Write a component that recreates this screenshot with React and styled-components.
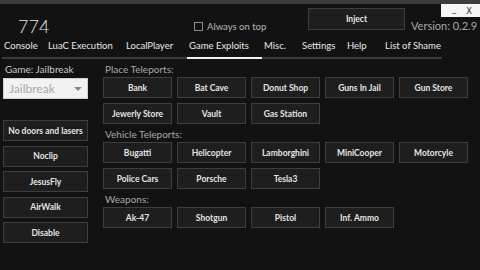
import React from "react";
import styled, { createGlobalStyle } from "styled-components";

const Global = createGlobalStyle`
  html, body { margin: 0; padding: 0; background: #121212; }
  body { font-family: Lato, "Open Sans", sans-serif; }
  * { box-sizing: border-box; }
`;

const Window = styled.div`
  position: relative;
  width: 480px;
  height: 270px;
  background: #121212;
  display: flex;
  flex-direction: column;
  overflow: hidden;
`;

const TopStrip = styled.div`
  height: 4px;
  background: #3c3c3c;
  flex: none;
`;

const Header = styled.div`
  height: 34px;
  display: flex;
  align-items: flex-start;
  flex: none;
`;

const Title = styled.div`
  flex: none;
  width: 194px;
  padding-left: 18px;
  padding-top: 11px;
  font-size: 18px;
  font-weight: 300;
  color: #e6e6e6;
  line-height: 22px;
`;

const CheckGroup = styled.label`
  flex: none;
  width: 114px;
  display: flex;
  align-items: center;
  gap: 4px;
  padding-top: 17px;
  font-size: 9.5px;
  color: #b8b8b8;
`;

const CheckBox = styled.span`
  width: 9px;
  height: 9px;
  border: 1px solid #8a8a8a;
  background: #121212;
`;

const Button = styled.button`
  font-family: Lato, "Open Sans", sans-serif;
  font-weight: 700;
  font-size: 8.5px;
  color: #e4e4e4;
  background: #1e1e1e;
  border: 1px solid #3e3e3e;
  height: 21px;
  padding: 0;
  margin: 0;
  display: flex;
  align-items: center;
  justify-content: center;
  white-space: nowrap;
`;

const InjectButton = styled(Button)`
  flex: none;
  width: 97px;
  height: 22px;
  margin-top: 4px;
`;

const RightBox = styled.div`
  flex: 1;
  display: flex;
  flex-direction: column;
  align-items: flex-end;
`;

const Controls = styled.div`
  width: 39px;
  height: 13px;
  background-color: #f6f6f6;
  display: flex;
  align-items: center;
  justify-content: space-around;
  padding: 0 3px 0 6px;
  font-family: "Open Sans", sans-serif;
  font-size: 9px;
  color: #111111;
  line-height: 1;
`;

const CtrlGlyph = styled.span`
  color: #111111;
  position: relative;
  top: ${(p) => (p.$low ? "-2px" : "0")};
`;

const Version = styled.div`
  align-self: flex-start;
  margin-left: 6px;
  margin-top: 2px;
  font-size: 11px;
  color: #a8a8a8;
  white-space: nowrap;
`;

const TabBar = styled.div`
  margin-left: 2px;
  width: 440px;
  height: 21px;
  display: flex;
  border-bottom: 2px solid #3a3a3a;
  flex: none;
`;

const Tab = styled.div`
  flex: none;
  width: ${(p) => p.$w}px;
  padding-left: 2px;
  font-size: 9.5px;
  color: #e8e8e8;
  line-height: 16px;
  white-space: nowrap;
  margin-bottom: -2px;
  border-bottom: 2px solid ${(p) => (p.$active ? "#f2f2f2" : "transparent")};
`;

const Body = styled.div`
  display: flex;
  padding-top: 2px;
  flex: 1;
`;

const LeftPanel = styled.div`
  width: 103px;
  padding-left: 3px;
  display: flex;
  flex-direction: column;
  flex: none;
`;

const GameLabel = styled.div`
  font-size: 10px;
  color: #c8c8c8;
  padding-left: 2px;
  height: 17px;
  line-height: 17px;
`;

const Select = styled.div`
  width: 85px;
  height: 21px;
  background: #f2f2f2;
  border: 1px solid #d0d0d0;
  display: flex;
  align-items: center;
  justify-content: space-between;
  padding: 0 5px 0 5px;
  font-size: 12px;
  color: #a8a8a8;
`;

const Arrow = styled.span`
  width: 0;
  height: 0;
  border-left: 4px solid transparent;
  border-right: 4px solid transparent;
  border-top: 4px solid #8a8a8a;
`;

const LeftButtons = styled.div`
  margin-top: 21px;
  display: flex;
  flex-direction: column;
  gap: 4.5px;
`;

const LeftButton = styled(Button)`
  width: 85px;
`;

const RightPanel = styled.div`
  display: flex;
  flex-direction: column;
  gap: 2px;
`;

const Section = styled.div`
  display: flex;
  flex-direction: column;
`;

const SectionLabel = styled.div`
  height: 16px;
  line-height: 16px;
  font-size: 10px;
  color: #a8a8a8;
  padding-left: 2px;
`;

const Grid = styled.div`
  display: grid;
  grid-template-columns: repeat(5, 69px);
  column-gap: 5px;
  row-gap: 5px;
`;

const tabs = [
  ["Console", 44],
  ["LuaC Execution", 78],
  ["LocalPlayer", 63],
  ["Game Exploits", 75],
  ["Misc.", 38],
  ["Settings", 45],
  ["Help", 38],
  ["List of Shame", 58],
];

const sections = [
  {
    label: "Place Teleports:",
    items: ["Bank", "Bat Cave", "Donut Shop", "Guns In Jail", "Gun Store", "Jewerly Store", "Vault", "Gas Station"],
  },
  {
    label: "Vehicle Teleports:",
    items: ["Bugatti", "Helicopter", "Lamborghini", "MiniCooper", "Motorcyle", "Police Cars", "Porsche", "Tesla3"],
  },
  {
    label: "Weapons:",
    items: ["Ak-47", "Shotgun", "Pistol", "Inf. Ammo"],
  },
];

export default function App() {
  return (
    <>
      <Global />
      <Window>
        <TopStrip />
        <Header>
          <Title>774</Title>
          <CheckGroup>
            <CheckBox />
            Always on top
          </CheckGroup>
          <InjectButton>Inject</InjectButton>
          <RightBox>
            <Controls>
              <CtrlGlyph $low>_</CtrlGlyph>
              <CtrlGlyph>X</CtrlGlyph>
            </Controls>
            <Version>Version: 0.2.9</Version>
          </RightBox>
        </Header>
        <TabBar>
          {tabs.map(([t, w]) => (
            <Tab key={t} $w={w} $active={t === "Game Exploits"}>
              {t}
            </Tab>
          ))}
        </TabBar>
        <Body>
          <LeftPanel>
            <GameLabel>Game: Jailbreak</GameLabel>
            <Select>
              Jailbreak
              <Arrow />
            </Select>
            <LeftButtons>
              {["No doors and lasers", "Noclip", "JesusFly", "AirWalk", "Disable"].map((b) => (
                <LeftButton key={b}>{b}</LeftButton>
              ))}
            </LeftButtons>
          </LeftPanel>
          <RightPanel>
            {sections.map((s) => (
              <Section key={s.label}>
                <SectionLabel>{s.label}</SectionLabel>
                <Grid>
                  {s.items.map((i) => (
                    <Button key={i}>{i}</Button>
                  ))}
                </Grid>
              </Section>
            ))}
          </RightPanel>
        </Body>
      </Window>
    </>
  );
}
